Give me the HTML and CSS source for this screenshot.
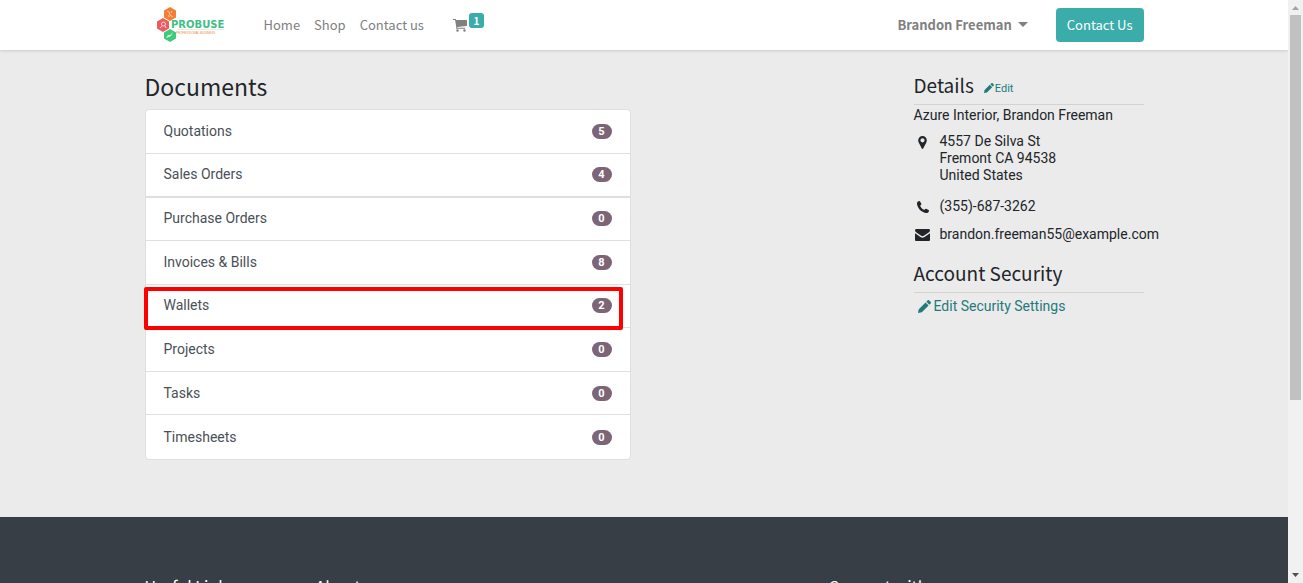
FILE: index.html
```html
<!DOCTYPE html>
<html lang="en">
<head>
<meta charset="utf-8">
<title>My Account</title>
<link rel="stylesheet" href="styles.css">
</head>
<body>
<div class="page">
  <header class="topbar">
    <div class="container topbar-inner">
      <a class="logo" href="#" aria-label="Probuse">
        <svg width="70" height="36" viewBox="0 0 70 36">
          <path d="M14 0l6 3.500v7l-6 3.500-6-3.500v-7z" fill="#f08036"/>
          <path d="M7 11l6 3.500v7L7 25l-6-3.500v-7z" fill="#ec5b62"/>
          <path d="M14 22l6 3.500v6L14 35l-6-3.500v-6z" fill="#3fca7c"/>
          <path d="M11 4l2 1 1 3 3 2M16 4l-1 2M12 9h2" stroke="#fbc79c" fill="none"/>
          <circle cx="7.500" cy="17" r="2" stroke="#ffd0d2" fill="none"/>
          <path d="M4 21l2-2M9 19l1 2" stroke="#ffd0d2"/>
          <path d="M10 31l2-3 2 0 3-3-2 4-2 1z" fill="#c9f5da"/>
          <path d="M21 22.500h47" stroke="#e9efec"/>
          <text x="15" y="21" class="logo-name">PROBUSE</text>
          <text x="20" y="27" class="logo-tag">PROFESSIONAL BUSINESS</text>
        </svg>
      </a>
      <nav class="menu">
        <a href="#">Home</a>
        <a href="#">Shop</a>
        <a href="#">Contact us</a>
      </nav>
      <a class="cart" href="#" aria-label="Cart">
        <svg width="14" height="13" viewBox="0 0 14 13" fill="#808080"><path d="M0 0h2.600c.4 0 .5.500.6 1H13.500c.3 0 .5.200.5.500v5c0 .3-.2.500-.5.500L4.300 8l.1.800h7.800v1H3.500c-.3 0-.5-.2-.5-.5l.3-1.100L2.100 1H0z"/><circle cx="4.500" cy="11.500" r="1.200"/><circle cx="11.500" cy="11.500" r="1.200"/></svg>
        <span class="cart-count">1</span>
      </a>
      <button class="user" type="button">Brandon Freeman<span class="caret"></span></button>
      <button class="contact" type="button">Contact Us</button>
    </div>
  </header>
  <main class="container content">
    <section class="documents">
      <h1>Documents</h1>
      <ul class="doc-list">
        <li><a href="#">Quotations</a><span class="count">5</span></li>
        <li><a href="#">Sales Orders</a><span class="count">4</span></li>
        <li class="thick"><a href="#">Purchase Orders</a><span class="count">0</span></li>
        <li><a href="#">Invoices &amp; Bills</a><span class="count">8</span></li>
        <li class="marked"><a href="#">Wallets</a><span class="count">2</span></li>
        <li><a href="#">Projects</a><span class="count">0</span></li>
        <li><a href="#">Tasks</a><span class="count">0</span></li>
        <li><a href="#">Timesheets</a><span class="count">0</span></li>
      </ul>
    </section>
    <aside class="side">
      <div class="side-head">
        <h2>Details</h2>
        <a class="edit" href="#"><svg width="10" height="10" viewBox="0 0 12 12" fill="currentColor"><path d="M0 12l.7-3.500L7 2.200 9.800 5 3.500 11.300zM7.700 1.500L8.800.4c.5-.5 1-.5 1.500 0l1.300 1.300c.5.500.5 1 0 1.500l-1.100 1.100z"/></svg>Edit</a>
      </div>
      <div class="partner">Azure Interior, Brandon Freeman</div>
      <address class="facts">
        <svg class="pin" width="9" height="13" viewBox="0 0 9 13"><path fill-rule="evenodd" d="M4.500 0A4.300 4.300 0 0 1 8.800 4.300c0 1-.3 1.600-.5 2.100L5.200 12.500c-.3.600-1.100.6-1.400 0L.7 6.400C.5 5.900.2 5.300.2 4.300A4.300 4.300 0 0 1 4.500 0zm0 2.200a2.100 2.100 0 1 0 0 4.200 2.100 2.100 0 0 0 0-4.200z"/></svg>
        <div>4557 De Silva St<br>Fremont CA 94538<br>United States</div>
        <svg width="12" height="12" viewBox="0 0 12 12"><path d="M0 2C.3.800 1.200.2 2.400 0c.4 0 .6.300.7.500l1.200 2.300c.3.600-.1.900-.5 1.300-.4.300-.6.500-.5.800.7 1.700 2 3 3.800 3.900.3.100.5-.1.800-.5.400-.4.700-.8 1.300-.5l2.300 1.200c.3.200.5.300.5.700-.2 1.200-.8 2-2 2.200-1 .3-2 0-3-.4C3.600 10.200 1.700 8 .5 5 .1 4 -.2 3 0 2z"/></svg>
        <div>(355)-687-3262</div>
        <svg width="15" height="12" viewBox="0 0 15 12"><path d="M0 1.500C0 .6.500 0 1.500 0h12c1 0 1.500.6 1.500 1.400 0 .8-.6 1.500-1.300 2L8.800 6.800c-.8.600-1.800.6-2.600 0L1.400 3.500C.8 3 0 2.300 0 1.500zM0 4.200l5.500 3.900c1.300.9 2.700.9 4 0L15 4.200v6.500c0 .8-.5 1.300-1.300 1.300H1.300C.5 12 0 11.500 0 10.700z"/></svg>
        <div>brandon.freeman55@example.com</div>
      </address>
      <div class="side-head">
        <h2>Account Security</h2>
      </div>
      <a class="security" href="#"><svg width="13" height="13" viewBox="0 0 12 12" fill="currentColor"><path d="M0 12l.7-3.500L7 2.200 9.800 5 3.500 11.300zM7.700 1.500L8.800.4c.5-.5 1-.5 1.500 0l1.300 1.300c.5.500.5 1 0 1.500l-1.100 1.100z"/></svg>Edit Security Settings</a>
    </aside>
  </main>
  <footer class="footer">
    <div class="container footer-inner">
      <h3>Useful Links</h3>
      <h3>About us</h3>
      <h3>Connect with us</h3>
    </div>
  </footer>
</div>
<div class="scroll" aria-hidden="true">
  <svg width="7" height="4" viewBox="0 0 7 4" fill="#a3a3a3"><path d="M0 4L3.500 0 7 4z"/></svg>
  <div class="track"><div class="thumb"></div></div>
  <svg width="7" height="4" viewBox="0 0 7 4" fill="#505050"><path d="M0 0h7L3.500 4z"/></svg>
</div>
</body>
</html>
```
FILE: styles.css
```css
* { box-sizing: border-box; }
body {
  margin: 0;
  display: flex;
  height: 100vh;
  overflow: hidden;
  background: #ebebeb;
  color: #212529;
  font: 14px/17px Roboto, sans-serif;
}
a { text-decoration: none; color: #1f7a7a; }
h1, h2, h3 { margin: 0; font-family: "Noto Sans CJK SC", sans-serif; font-weight: 400; white-space: nowrap; }
.page { flex: 1; min-width: 0; overflow: hidden; }
.container { max-width: 999px; margin: 0 auto; }

.topbar {
  background: #fff;
  box-shadow: 0 1px 3px rgba(0, 0, 0, 0.14);
  font-family: "Noto Sans CJK SC", sans-serif;
  font-size: 13px;
}
.topbar-inner { display: flex; align-items: center; height: 50px; }
.topbar a { color: #808080; }
.logo { margin-left: 11px; }
.logo svg { display: block; }
.logo-name { font: bold 10px "DejaVu Sans", sans-serif; fill: #3dbf86; }
.logo-tag { font: 3px "Liberation Sans", sans-serif; fill: #f08a3c; }
.menu { display: flex; gap: 14px; margin-left: 38px; padding-bottom: 2px; }
.cart { display: flex; align-items: center; gap: 2px; margin-left: 29px; }
.cart-count {
  background: #3aadaa;
  color: #fff;
  border-radius: 3px;
  width: 15px;
  height: 15px;
  margin-bottom: 10px;
  font-size: 10px;
  line-height: 15px;
  font-weight: 700;
  text-align: center;
}
.user {
  display: flex;
  align-items: center;
  gap: 6px;
  margin-left: auto;
  padding: 0 0 2px;
  border: 0;
  background: none;
  color: #808080;
  font: inherit;
  font-weight: 700;
}
.caret { border: 5px solid transparent; border-top-color: #808080; border-bottom: 0; }
.contact {
  margin-left: 28px;
  padding: 0 11px 2px;
  height: 34px;
  border: 0;
  border-radius: 4px;
  background: #3aadaa;
  color: #fff;
  font: inherit;
}

.content { display: flex; justify-content: space-between; padding: 20px 0 57px; }
.documents { flex: 0 1 486px; }
h1 { font-size: 23px; line-height: 33px; margin-bottom: 6px; }
.doc-list {
  display: grid;
  grid-auto-rows: 1fr;
  min-height: 351px;
  margin: 0;
  padding: 0;
  list-style: none;
  background: #fff;
  border: 1px solid #dfdfdf;
  border-radius: 4px;
}
.doc-list li {
  position: relative;
  display: flex;
  align-items: center;
  justify-content: space-between;
  padding: 0 18px;
  border-bottom: 1px solid #dfdfdf;
}
.doc-list li:last-child { border-bottom: 0; }
.doc-list li.thick { box-shadow: inset 0 1px 0 #dfdfdf; }
.doc-list a { color: #495057; }
.count {
  background: #7c6576;
  color: #fff;
  width: 20px;
  border-radius: 8px;
  font-size: 11px;
  line-height: 15px;
  font-weight: 700;
  text-align: center;
}
.marked::after {
  content: "";
  position: absolute;
  z-index: 1;
  inset: 2px 7px -3px -2px;
  border: 4px solid #f00;
  border-radius: 2px;
}

.side { flex: 0 0 230px; min-width: 0; white-space: nowrap; }
.side-head {
  display: flex;
  align-items: baseline;
  gap: 10px;
  padding-bottom: 5px;
  border-bottom: 1px solid #d3d3d3;
}
h2 { font-size: 19px; line-height: 29px; }
.edit { display: flex; align-items: center; gap: 1px; font-size: 11px; }
.partner { margin: 2px 0 9px; }
.facts {
  display: grid;
  grid-template-columns: 18px auto;
  column-gap: 8px;
  row-gap: 11px;
  margin-bottom: 15px;
  font-style: normal;
}
.facts > svg { justify-self: center; margin-top: 3px; fill: #212529; }
.facts > :nth-child(2) { margin-bottom: 3px; }
.security { display: flex; align-items: center; gap: 3px; margin: 5px 0 0 4px; }

.footer { background: #383e45; color: #fff; min-height: 200px; padding-top: 56px; }
.footer-inner { display: grid; grid-template-columns: 171px 513px 1fr; }
h3 { font-size: 16px; line-height: 26px; }

.scroll {
  display: flex;
  flex-direction: column;
  align-items: center;
  flex: 0 0 15px;
  padding: 6px 0;
  background: #f1f1f1;
}
.track { display: grid; grid-template-rows: 16fr 7fr; flex: 1; align-self: stretch; margin: 5px 2px; }
.thumb { background: #c1c1c1; }
```
